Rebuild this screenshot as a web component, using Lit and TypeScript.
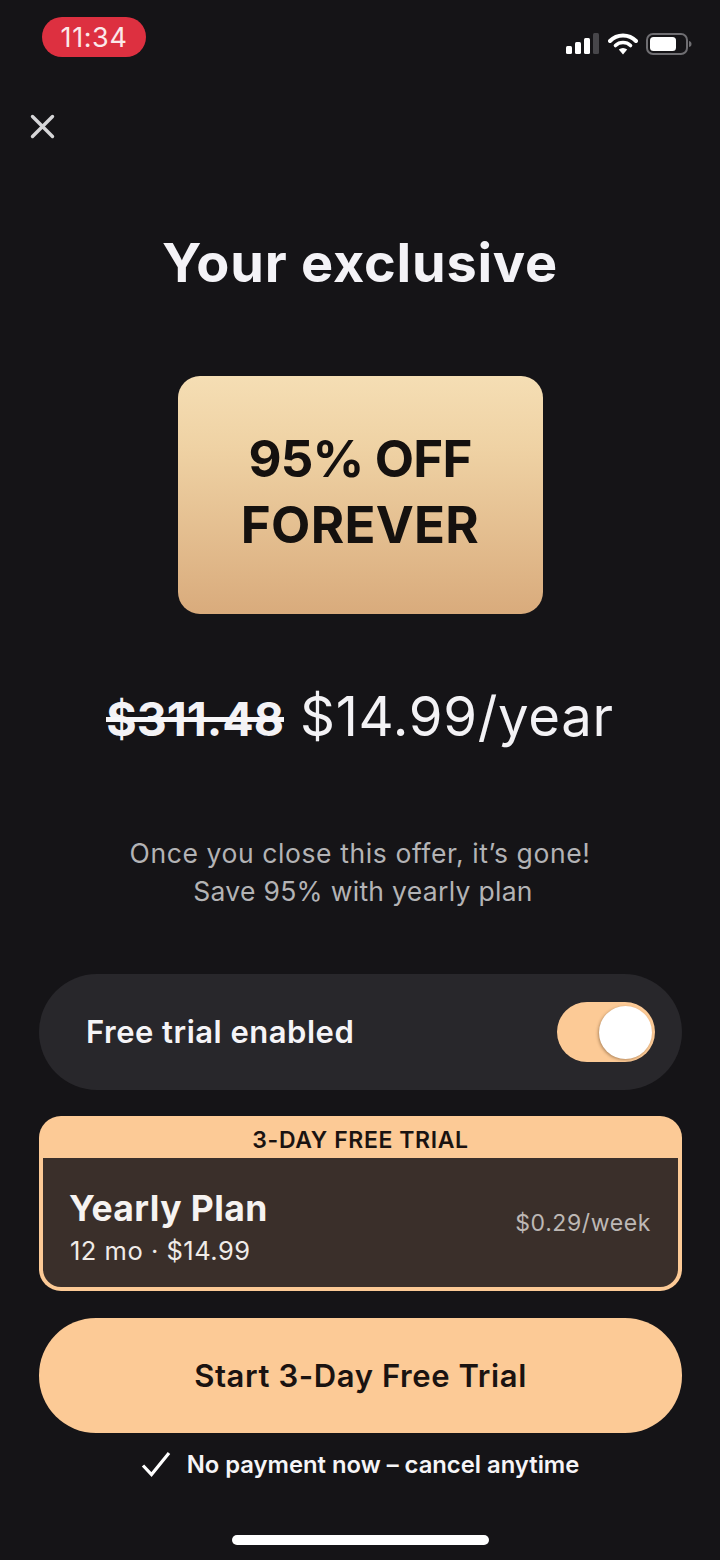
import { LitElement, html, css } from "lit";
import { customElement } from "lit/decorators.js";

@customElement("app-root")
export class AppRoot extends LitElement {
  static styles = css`
    :host {
      display: block;
      width: 720px;
      height: 1560px;
      background: #151417;
      color: #f4f3f6;
      font-family: Inter, "Liberation Sans", sans-serif;
      overflow: hidden;
    }
    .page { display: flex; flex-direction: column; height: 1560px; box-sizing: border-box; }
    .status {
      display: flex; justify-content: space-between; align-items: flex-start;
      padding: 17px 28px 0 42px; height: 57px; box-sizing: border-box; flex: none;
    }
    .time {
      width: 104px; height: 40px; border-radius: 20px; background: #dd3040;
      color: #fbe9ea; display: flex; align-items: center; justify-content: center;
      font-size: 27px; font-weight: 400; letter-spacing: 0.6px;
    }
    .sys { display: flex; align-items: center; gap: 8px; margin-top: 16px; }
    .sys svg { display: block; }
    .close { display: block; margin: 57px 0 0 30px; flex: none; }
    h1 {
      margin: 94px 0 0; text-align: center; font-size: 54px; line-height: 60px;
      font-weight: 700; color: #f4f3f7; flex: none; letter-spacing: 0.8px;
    }
    .offer {
      width: 365px; height: 238px; margin: 83px auto 0; border-radius: 22px; flex: none;
      background: linear-gradient(180deg, #f5deb4 0%, #efd2a4 30%, #d9ab7c 100%);
      color: #15110f; display: flex; flex-direction: column; align-items: center; justify-content: center;
      font-size: 51px; line-height: 66px; font-weight: 700; text-align: center;
      box-sizing: border-box; padding-bottom: 7px;
    }
    .offer .l1 { letter-spacing: -0.8px; }
    .offer .l2 { letter-spacing: 0.3px; }
    .price {
      margin: 71px 0 0; text-align: center; font-size: 54.5px; line-height: 62px; flex: none;
      letter-spacing: 0.7px; white-space: nowrap; color: #f3f2f5;
    }
    .old { font-weight: 700; font-size: 46.5px; position: relative; letter-spacing: 0; }
    .old::after {
      content: ""; position: absolute; left: 0; right: 0; top: 50%; height: 5px;
      margin-top: -2px; background: #f7f6f8;
    }
    .note {
      margin: 84px 0 0; text-align: center; font-size: 26.5px; line-height: 38px;
      color: #b3b3b5; letter-spacing: 0.6px; flex: none;
    }
    .note .second { display: block; letter-spacing: 0.3px; padding-left: 6px; }
    .toggle-row {
      margin: 64px 38px 0 39px; height: 116px; border-radius: 58px; background: #28272b;
      display: flex; align-items: center; justify-content: space-between;
      padding: 0 27px 0 47px; flex: none;
    }
    .toggle-row span { font-size: 31px; font-weight: 600; color: #f5f4f7; letter-spacing: 0.5px; margin-top: -1px; }
    .switch {
      width: 98px; height: 60px; border-radius: 30px; background: #fcca96;
      position: relative; flex: none;
    }
    .knob {
      position: absolute; right: 3px; top: 3.5px; width: 53px; height: 53px; border-radius: 50%;
      background: #fff; box-shadow: -1px 1px 3px rgba(90, 60, 30, 0.45);
    }
    .card {
      margin: 26px 38px 0 39px; height: 175px; box-sizing: border-box; padding: 0 4px 4px;
      border-radius: 22px; background: #fcca96;
      display: flex; flex-direction: column; flex: none;
    }
    .tag {
      height: 42px; box-sizing: border-box; padding-top: 5px; flex: none; display: flex; align-items: center; justify-content: center;
      color: #1a1311; font-size: 23px; font-weight: 600; letter-spacing: 0.6px;
    }
    .plan {
      flex: 1; display: flex; align-items: center; justify-content: space-between; padding: 0 27px 0 26px;
      background: #3a2f2a; border-radius: 0 0 18px 18px;
    }
    .plan-text { padding-top: 6px; }
    .plan-name { font-size: 35.5px; line-height: 42px; font-weight: 700; color: #f6f3f1; margin-top: 3px; letter-spacing: 0.4px; }
    .plan-sub { font-size: 25.5px; line-height: 30px; color: #efebe8; letter-spacing: 0.5px; margin: 6px 0 0 1px; }
    .week { font-size: 23px; color: #bdb8b5; letter-spacing: 0.6px; }
    .cta {
      margin: 27px 38px 0 39px; height: 115px; border-radius: 57px; background: #fcca96;
      display: flex; align-items: center; justify-content: center; flex: none;
      color: #1a1311; font-size: 31px; font-weight: 600; letter-spacing: 0.6px;
    }
    .assure {
      display: flex; align-items: center; justify-content: center; gap: 16px; margin-top: 16px;
      height: 30px; flex: none; font-size: 23.8px; font-weight: 600; color: #f6f5f7;
    }
    .home {
      width: 257px; height: 10px; border-radius: 5px; background: #fff; margin: auto auto 15px;
      flex: none;
    }
  `;

  render() {
    return html`
      <div class="page">
        <div class="status">
          <div class="time">11:34</div>
          <div class="sys">
            <svg width="34" height="22" viewBox="0 0 34 22">
              <rect x="0" y="13" width="6" height="8" rx="1.5" fill="#fff" />
              <rect x="9" y="9" width="6" height="12" rx="1.5" fill="#fff" />
              <rect x="18" y="5" width="6" height="16" rx="1.5" fill="#fff" />
              <rect x="27" y="0" width="6" height="21" rx="1.5" fill="#47464a" />
            </svg>
            <svg width="30" height="22" viewBox="0 0 30 22">
              <path d="M2 8 A18 18 0 0 1 28 8" fill="none" stroke="#fff" stroke-width="4" stroke-linecap="round" />
              <path d="M7.5 12.5 A11 11 0 0 1 22.5 12.5" fill="none" stroke="#fff" stroke-width="3.6" stroke-linecap="round" />
              <path d="M15 21.5 L10.8 16.6 A6 6 0 0 1 19.2 16.6 Z" fill="#fff" />
            </svg>
            <svg width="46" height="22" viewBox="0 0 46 22">
              <rect x="1" y="1" width="40" height="20" rx="6" fill="none" stroke="#6f6e72" stroke-width="2" />
              <rect x="4" y="4" width="26" height="14" rx="3.5" fill="#fff" />
              <path d="M43 8 C45 8.5 45.5 9.5 45.5 11 C45.5 12.5 45 13.5 43 14 Z" fill="#6f6e72" />
            </svg>
          </div>
        </div>
        <svg class="close" width="25" height="25" viewBox="0 0 25 25">
          <path d="M2.5 2.5 L22.5 22.5 M22.5 2.5 L2.5 22.5" stroke="#d6d6d8" stroke-width="3.4" stroke-linecap="round" />
        </svg>
        <h1>Your exclusive</h1>
        <div class="offer"><div class="l1">95% OFF</div><div class="l2">FOREVER</div></div>
        <div class="price"><span class="old">$311.48</span> $14.99/year</div>
        <div class="note">Once you close this offer, it’s gone!<span class="second">Save 95% with yearly plan</span></div>
        <div class="toggle-row">
          <span>Free trial enabled</span>
          <div class="switch"><div class="knob"></div></div>
        </div>
        <div class="card">
          <div class="tag">3-DAY FREE TRIAL</div>
          <div class="plan">
            <div class="plan-text">
              <div class="plan-name">Yearly Plan</div>
              <div class="plan-sub">12 mo · $14.99</div>
            </div>
            <div class="week">$0.29/week</div>
          </div>
        </div>
        <div class="cta">Start 3-Day Free Trial</div>
        <div class="assure">
          <svg width="30" height="26" viewBox="0 0 30 26">
            <path d="M2 14.5 L10.5 23.5 L28 2" fill="none" stroke="#fff" stroke-width="3.2" />
          </svg>
          <span>No payment now – cancel anytime</span>
        </div>
        <div class="home"></div>
      </div>
    `;
  }
}
